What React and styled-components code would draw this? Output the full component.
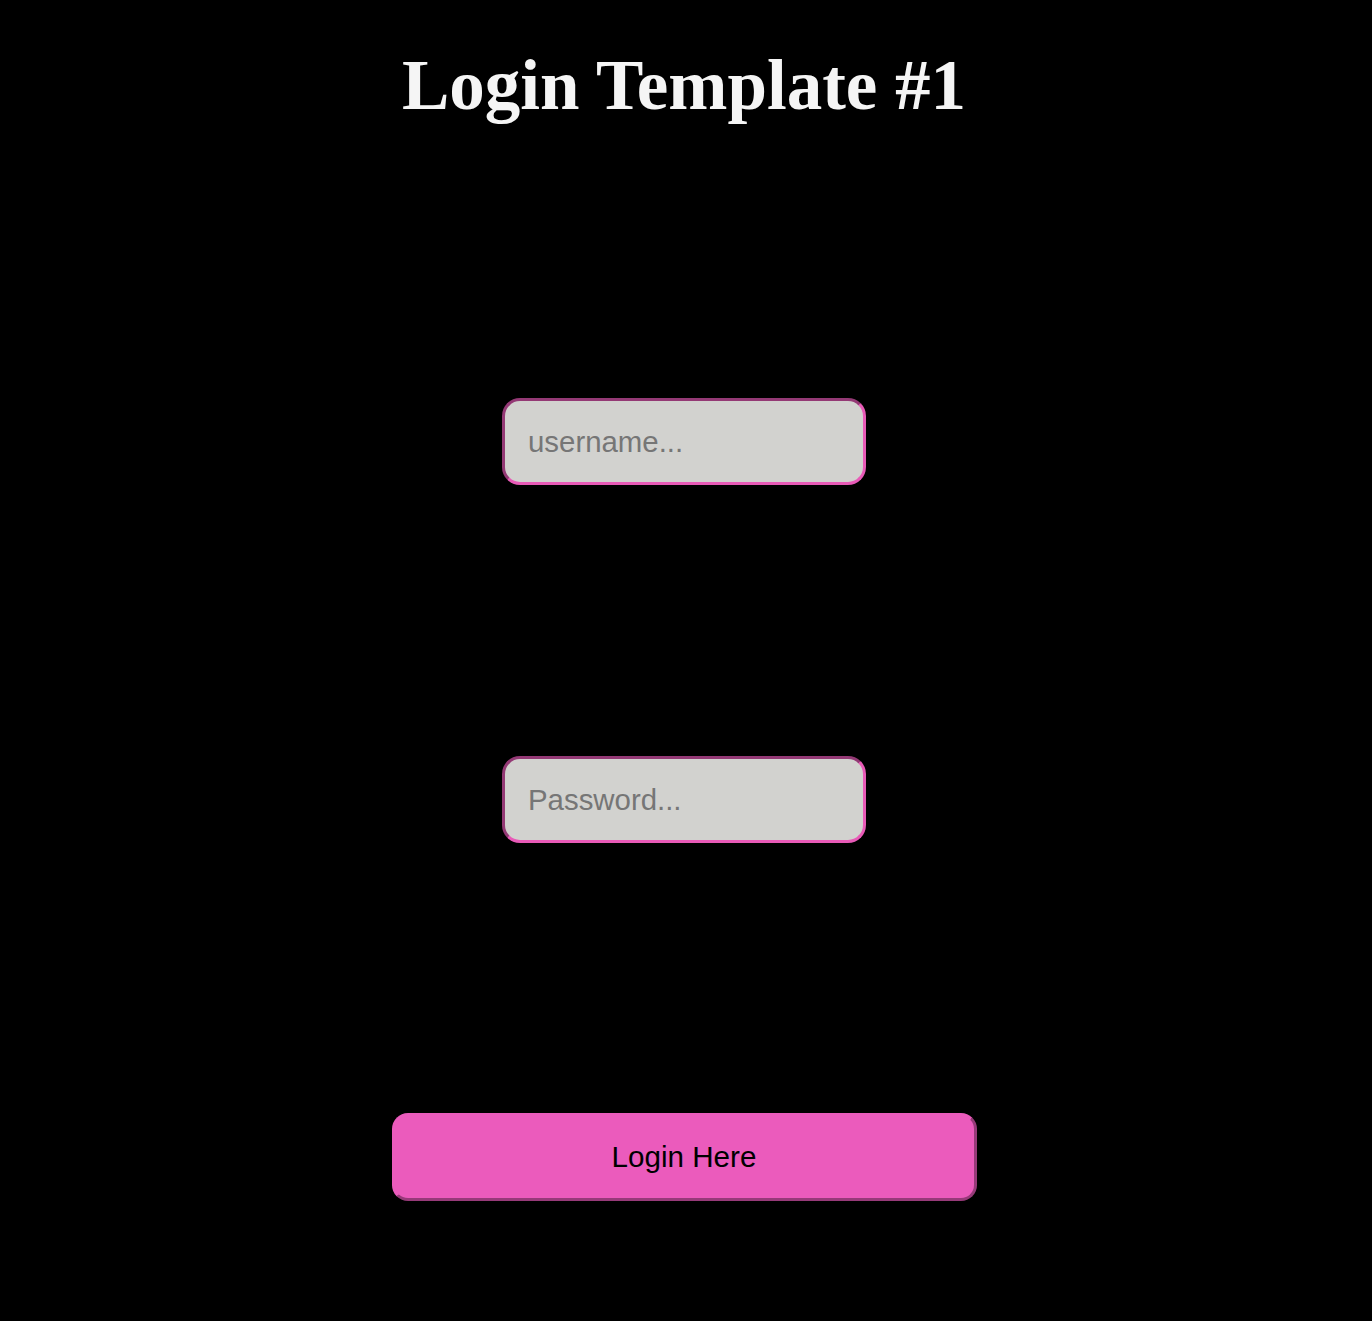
import React from "react";
import styled, { createGlobalStyle } from "styled-components";

const Global = createGlobalStyle`
  html, body { margin: 0; padding: 0; background: #000; }
  body { font-family: "Liberation Serif", "Times New Roman", serif; }
`;

const Page = styled.main`
  display: flex;
  flex-direction: column;
  align-items: center;
  min-height: 1321px;
  padding-right: 4px;
  box-sizing: border-box;
`;

const Title = styled.h1`
  margin: 39px 0 0;
  font-family: "Liberation Serif", "Times New Roman", serif;
  font-weight: 700;
  font-size: 71px;
  line-height: 92px;
  color: #f5f5f5;
`;

const Form = styled.form`
  display: flex;
  flex-direction: column;
  align-items: center;
  margin-top: 267px;
`;

const Field = styled.input`
  box-sizing: border-box;
  width: 364px;
  height: 87px;
  padding: 0 23px;
  margin-bottom: ${(p) => p.$after}px;
  background: #d2d2cf;
  border: 3px inset #e85ab7;
  border-radius: 18px;
  font-family: "Liberation Sans", Arial, sans-serif;
  font-size: 29.4px;
  color: #333;
  outline: none;
  &::placeholder { color: #767676; }
`;

const Button = styled.button`
  box-sizing: border-box;
  width: 585px;
  height: 88px;
  padding: 0;
  background: #eb5bbc;
  border: 3px outset #eb5bbc;
  border-radius: 16px;
  font-family: "Liberation Sans", Arial, sans-serif;
  font-size: 29.6px;
  color: #000;
  cursor: pointer;
`;

export default function App() {
  return (
    <>
      <Global />
      <Page>
        <Title>Login Template #1</Title>
        <Form onSubmit={(e) => e.preventDefault()}>
          <Field type="text" placeholder="username..." $after={271} />
          <Field type="password" placeholder="Password..." $after={270} />
          <Button type="submit">Login Here</Button>
        </Form>
      </Page>
    </>
  );
}
